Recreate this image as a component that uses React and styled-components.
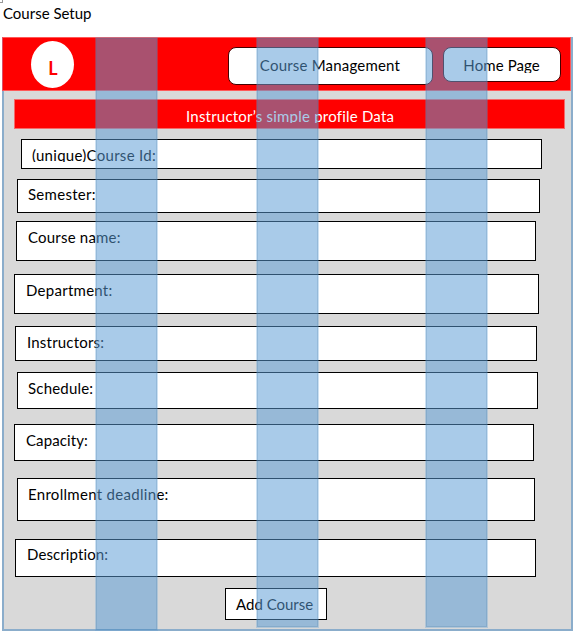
import React from "react";
import styled, { createGlobalStyle } from "styled-components";

const GlobalStyle = createGlobalStyle`
  * { box-sizing: border-box; }
  body { margin: 0; background: #fff; color: #000; overflow: hidden; }
  #root { font: 15px/20px Lato, "Liberation Sans", sans-serif; }
`;

const Page = styled.div`
  position: relative;
  width: 584px;
  height: 643px;
  padding: 3px 0 0 2px;
  white-space: nowrap;
`;

const Corner = styled.span`
  position: absolute;
  left: 0;
  top: 0;
  width: 3px;
  height: 3px;
  border: solid #999;
  border-width: 0 1px 1px 0;
`;

const Text = styled.span`
  display: block;
  letter-spacing: ${(p) => p.$track || 0}px;
`;

const Title = styled.h1`
  margin: 0;
  padding-left: 1px;
  height: 34px;
  font: inherit;
`;

const Panel = styled.main`
  width: 571px;
  height: 594px;
  background: #d9d9d9;
  border: solid #8badcb;
  border-width: 0 2px 2px;
  display: flex;
  flex-direction: column;
  align-items: flex-start;
`;

const Header = styled.header`
  flex: none;
  width: 569px;
  height: 54px;
  margin-left: -2px;
  padding: 4px 9px 0 28px;
  display: flex;
  align-items: flex-start;
  background: #f00;
  border: 1px solid #ff5858;
  border-left-color: #d95068;
`;

const Avatar = styled.div`
  width: 43px;
  height: 47px;
  margin-top: -1px;
  padding: 17px 0 0 1px;
  border-radius: 50%;
  background: #fff;
  color: #f00;
  text-align: center;
  font-size: 18px;
  font-weight: 700;
`;

const NavButton = styled.button`
  height: ${(p) => p.$height}px;
  width: ${(p) => p.$width}px;
  margin: 5px 0 0 ${(p) => p.$gap}px;
  padding: 7px 0 0 ${(p) => p.$indent}px;
  display: flex;
  align-items: flex-start;
  border: 1px solid #400;
  border-radius: 8px;
  background: #fff;
  color: #000;
  font: inherit;
`;

const Clip = styled.div`
  height: ${(p) => p.$height}px;
  overflow: hidden;
`;

const Banner = styled.div`
  flex: none;
  width: 551px;
  height: 30px;
  margin: 8px 0 10px 10px;
  padding: 6px 0 0 171px;
  background: #f00;
  border: 1px solid #f46a6a;
  color: #fff;
`;

const Field = styled.div`
  flex: none;
  width: ${(p) => p.$width}px;
  height: ${(p) => p.$height}px;
  margin: 0 0 ${(p) => p.$after}px ${(p) => p.$left - 4}px;
  padding: ${(p) => p.$top}px 0 0 ${(p) => p.$indent}px;
  background: #fff;
  border: 1px solid #000;
`;

const AddButton = styled.button`
  width: 102px;
  height: 32px;
  margin-left: 221px;
  padding: 5px 0 0 10px;
  display: flex;
  align-items: flex-start;
  background: #fff;
  border: 1px solid #000;
  color: #000;
  font: inherit;
`;

const Band = styled.div`
  position: absolute;
  top: 38px;
  left: ${(p) => p.$left}px;
  width: 61px;
  height: ${(p) => p.$height}px;
  background: rgba(91, 155, 213, 0.52);
  border: 1px solid rgba(65, 113, 156, 0.2);
  box-shadow: 0 0 0 1px rgba(91, 155, 213, 0.3);
  pointer-events: none;
`;

const fields = [
  { label: "(unique)Course Id:", left: 21, width: 521, height: 30, after: 10, top: 5, indent: 10, clip: 17, track: 0.28 },
  { label: "Semester:", left: 17, width: 523, height: 34, after: 8, top: 4, indent: 10, track: 0.28 },
  { label: "Course name:", left: 16, width: 520, height: 40, after: 13, top: 5, indent: 11, track: 0.2 },
  { label: "Department:", left: 14, width: 525, height: 40, after: 12, top: 5, indent: 11, track: 0.27 },
  { label: "Instructors:", left: 15, width: 522, height: 35, after: 11, top: 5, indent: 11, track: 0.2 },
  { label: "Schedule:", left: 17, width: 521, height: 37, after: 15, top: 5, indent: 10, track: 0.2 },
  { label: "Capacity:", left: 14, width: 520, height: 37, after: 17, top: 5, indent: 11, track: 0.1 },
  { label: "Enrollment deadline:", left: 17, width: 518, height: 43, after: 18, top: 5, indent: 10, track: 0.3 },
  { label: "Description:", left: 15, width: 521, height: 38, after: 11, top: 4, indent: 11, track: 0.1 },
];

export default function App() {
  return (
    <>
      <GlobalStyle />
      <Page>
        <Corner />
        <Title><Text>Course Setup</Text></Title>
        <Panel>
          <Header>
            <Avatar>L</Avatar>
            <NavButton $width={206} $height={38} $gap={154} $indent={31}>
              <Text $track={0.2}>Course Management</Text>
            </NavButton>
            <NavButton $width={118} $height={35} $gap={10} $indent={19}>
              <Clip $height={18}><Text $track={0.1}>Home Page</Text></Clip>
            </NavButton>
          </Header>
          <Banner>
            <Clip $height={17}><Text $track={0.21}>Instructor’s simple profile Data</Text></Clip>
          </Banner>
          {fields.map((f) => (
            <Field key={f.label} $left={f.left} $width={f.width} $height={f.height} $after={f.after} $top={f.top} $indent={f.indent}>
              <Clip $height={f.clip || 20}><Text $track={f.track}>{f.label}</Text></Clip>
            </Field>
          ))}
          <AddButton><Text>Add Course</Text></AddButton>
        </Panel>
        <Band $left={96} $height={592} />
        <Band $left={257} $height={589} />
        <Band $left={426} $height={589} />
      </Page>
    </>
  );
}
